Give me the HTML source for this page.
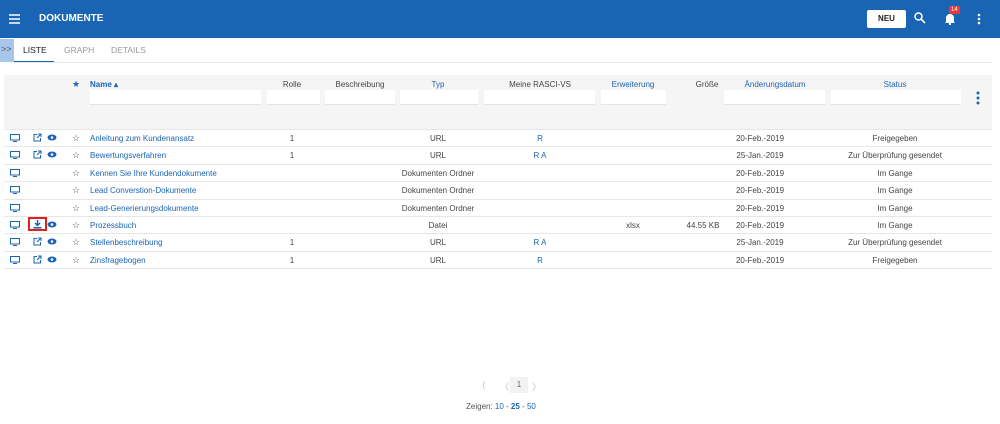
<!DOCTYPE html><html><head><style>
*{margin:0;padding:0;box-sizing:border-box}
body{width:1000px;height:424px;background:#fff;font-family:"Liberation Sans",sans-serif;font-size:8px;color:#444;position:relative;overflow:hidden}
.a{position:absolute;white-space:nowrap}
.hdr{position:absolute;left:0;top:0;width:1000px;height:38px;background:#1a64b4}
.b{color:#1a64b4}
.c{transform:translateX(-50%)}
.inp{position:absolute;top:90px;height:15px;background:#fff;border-bottom:1px solid #e4e4e4}
.row{position:absolute;left:4px;width:988px;height:1px;background:#e6e6e6}
</style></head><body>
<div class="hdr"></div>
<svg class="a" style="left:9px;top:14px" width="12" height="10"><path d="M0 1h11M0 5h11M0 9h11" stroke="#fff" stroke-width="1.6"/></svg>
<div class="a" style="left:39px;top:13px;color:#fff;font-weight:bold;font-size:10px">DOKUMENTE</div>
<div class="a" style="left:867px;top:10px;width:39px;height:18px;background:#fff;border-radius:2px;font-weight:bold;font-size:8px;color:#222;text-align:center;line-height:18px">NEU</div>
<svg class="a" style="left:914px;top:12px" width="12" height="12"><circle cx="4.5" cy="4.5" r="3.5" stroke="#fff" stroke-width="1.5" fill="none"/><path d="M7 7l4 4" stroke="#fff" stroke-width="1.6"/></svg>
<svg class="a" style="left:944px;top:12px" width="12" height="13"><path d="M2 10V6a4 4 0 0 1 8 0v4l1 1H1z" fill="#fff"/><rect x="5" y="11" width="2" height="2" fill="#fff"/></svg>
<div class="a" style="left:949px;top:6px;background:#e53935;color:#fff;font-size:6px;padding:1px 2px;border-radius:1px">14</div>
<svg class="a" style="left:977px;top:13px" width="4" height="12"><circle cx="2" cy="2" r="1.3" fill="#fff"/><circle cx="2" cy="6" r="1.3" fill="#fff"/><circle cx="2" cy="10" r="1.3" fill="#fff"/></svg>
<div class="a" style="left:0;top:39px;width:14px;height:23px;background:#a8c6ec"></div>
<div class="a" style="left:1px;top:44px;font-size:9px;color:#555">&gt;&gt;</div>
<div class="a" style="left:23px;top:45px;color:#222;font-size:8.5px">LISTE</div>
<div class="a" style="left:14px;top:61px;width:40px;height:2px;background:#1a64b4"></div>
<div class="a" style="left:64px;top:45px;color:#999;font-size:8.5px">GRAPH</div>
<div class="a" style="left:111px;top:45px;color:#999;font-size:8.5px">DETAILS</div>
<div class="a" style="left:14px;top:62px;width:978px;height:1px;background:#e6e6e6"></div>
<div class="a" style="left:4px;top:75px;width:988px;height:54px;background:#f5f5f5"></div>
<div class="a b" style="left:72px;top:79px;font-size:9px">★</div>
<div class="a b" style="left:90px;top:80px;font-weight:bold">Name ▴</div>
<div class="a c" style="left:292px;top:80px">Rolle</div>
<div class="a c" style="left:360px;top:80px">Beschreibung</div>
<div class="a c b" style="left:438px;top:80px">Typ</div>
<div class="a c" style="left:540px;top:80px">Meine RASCI-VS</div>
<div class="a c b" style="left:633px;top:80px">Erweiterung</div>
<div class="a c" style="left:707px;top:80px">Größe</div>
<div class="a c b" style="left:775px;top:80px">Änderungsdatum</div>
<div class="a c b" style="left:895px;top:80px">Status</div>
<div class="inp" style="left:90px;width:171px"></div>
<div class="inp" style="left:267px;width:53px"></div>
<div class="inp" style="left:325px;width:70px"></div>
<div class="inp" style="left:400px;width:78px"></div>
<div class="inp" style="left:484px;width:111px"></div>
<div class="inp" style="left:601px;width:65px"></div>
<div class="inp" style="left:724px;width:101px"></div>
<div class="inp" style="left:831px;width:130px"></div>
<svg class="a" style="left:976px;top:91px" width="4" height="14"><circle cx="2" cy="2" r="1.5" fill="#1a64b4"/><circle cx="2" cy="7" r="1.5" fill="#1a64b4"/><circle cx="2" cy="12" r="1.5" fill="#1a64b4"/></svg>
<div class="row" style="top:129px"></div>
<div id="rows"></div>
<script>
var d=[["Anleitung zum Kundenansatz","1","URL","R","","","20-Feb.-2019","Freigegeben",1],
["Bewertungsverfahren","1","URL","R A","","","25-Jan.-2019","Zur Überprüfung gesendet",1],
["Kennen Sie Ihre Kundendokumente","","Dokumenten Ordner","","","","20-Feb.-2019","Im Gange",0],
["Lead Converstion-Dokumente","","Dokumenten Ordner","","","","20-Feb.-2019","Im Gange",0],
["Lead-Generierungsdokumente","","Dokumenten Ordner","","","","20-Feb.-2019","Im Gange",0],
["Prozessbuch","","Datei","","xlsx","44.55 KB","20-Feb.-2019","Im Gange",2],
["Stellenbeschreibung","1","URL","R A","","","25-Jan.-2019","Zur Überprüfung gesendet",1],
["Zinsfragebogen","1","URL","R","","","20-Feb.-2019","Freigegeben",1]];
var h="";d.forEach(function(r,i){var y=129+i*17.4,t=y+5;
h+='<svg class="a" style="left:10px;top:'+(y+5)+'px" width="10" height="8"><rect x="0.5" y="0.5" width="9" height="5.5" fill="none" stroke="#1a64b4"/><path d="M3 7.5h4" stroke="#1a64b4"/></svg>';
if(r[8]==1)h+='<svg class="a" style="left:33px;top:'+(y+4)+'px" width="9" height="9"><path d="M4 1.5H1v6.5h6.5V5M5 1h3v3M8 1L4 5" fill="none" stroke="#1a64b4"/></svg>';
if(r[8]==2)h+='<div class="a" style="left:28px;top:'+(y+1)+'px;width:19px;height:14px;border:2px solid #e02020"></div><svg class="a" style="left:33px;top:'+(y+4)+'px" width="9" height="9"><path d="M4.5 0v5M2 3l2.5 2.5L7 3" fill="none" stroke="#1a64b4" stroke-width="1.5"/><rect x="0.5" y="7" width="8" height="1.6" fill="#1a64b4"/></svg>';
if(r[8])h+='<svg class="a" style="left:47px;top:'+(y+5)+'px" width="10" height="7"><ellipse cx="5" cy="3.5" rx="4.5" ry="3" fill="#1a64b4"/><circle cx="5" cy="3.5" r="1.3" fill="#fff"/></svg>';
h+='<div class="a" style="left:72px;top:'+(t-1)+'px;font-size:9px;color:#555">☆</div>';
h+='<div class="a b" style="left:90px;top:'+t+'px">'+r[0]+'</div>';
h+='<div class="a c" style="left:292px;top:'+t+'px">'+r[1]+'</div>';
h+='<div class="a c" style="left:438px;top:'+t+'px">'+r[2]+'</div>';
h+='<div class="a c b" style="left:540px;top:'+t+'px">'+r[3]+'</div>';
h+='<div class="a c" style="left:633px;top:'+t+'px">'+r[4]+'</div>';
h+='<div class="a c" style="left:703px;top:'+t+'px">'+r[5]+'</div>';
h+='<div class="a c" style="left:760px;top:'+t+'px">'+r[6]+'</div>';
h+='<div class="a c" style="left:895px;top:'+t+'px">'+r[7]+'</div>';
h+='<div class="row" style="top:'+(y+17.4)+'px"></div>';});
document.getElementById("rows").innerHTML=h;
</script>
<div class="a" style="left:482px;top:380px;color:#bbb;font-size:9px">⟨</div>
<div class="a" style="left:500px;top:380px;color:#bbb;font-size:9px">〈</div>
<div class="a" style="left:510px;top:377px;width:18px;height:16px;background:#f2f2f2;color:#666;text-align:center;line-height:16px">1</div>
<div class="a" style="left:532px;top:380px;color:#bbb;font-size:9px">〉</div>
<div class="a" style="left:466px;top:402px;color:#555">Zeigen: <span class="b">10</span> - <b class="b">25</b> - <span class="b">50</span></div>
</body></html>
